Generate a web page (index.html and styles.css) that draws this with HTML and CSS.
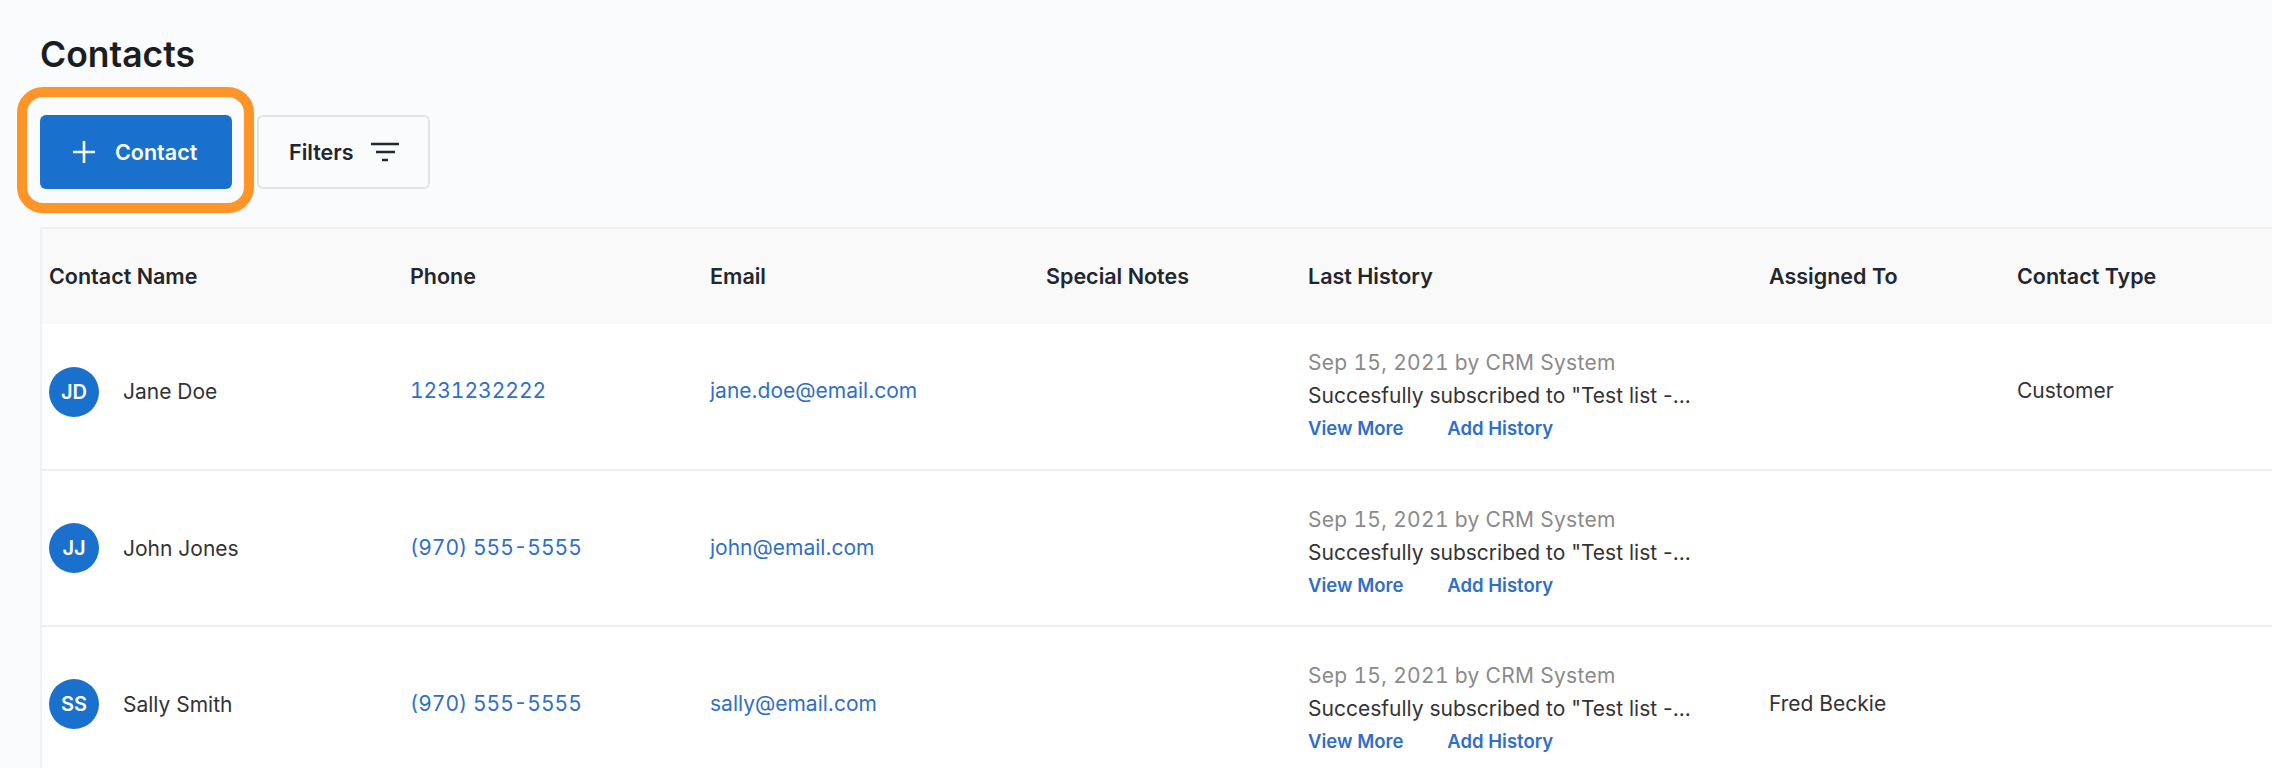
FILE: index.html
```html
<!DOCTYPE html>
<html lang="en">
<head>
    <meta charset="UTF-8">
    <title>Contacts</title>
    <link rel="stylesheet" href="styles.css">
</head>
<body>
    <div class="page">
        <h1>Contacts</h1>

        <div class="toolbar">
            <div class="add-wrap">
                <span class="highlight"></span>
                <button class="btn btn-primary">
                    <svg class="icon-plus" width="24" height="24" viewBox="0 0 24 24" fill="none" stroke="currentColor" stroke-width="2.6">
                        <path d="M12 1v22M1 12h22"/>
                    </svg>
                    Contact
                </button>
            </div>
            <button class="btn btn-filter">
                Filters
                <svg class="icon-filter" width="28" height="20" viewBox="0 0 28 20" fill="none" stroke="currentColor" stroke-width="2.7">
                    <path d="M0 2h28M5 10h19M11 18h6"/>
                </svg>
            </button>
        </div>

        <table class="contacts">
            <colgroup>
                <col class="col-name">
                <col class="col-phone">
                <col class="col-email">
                <col class="col-notes">
                <col class="col-history">
                <col class="col-assigned">
                <col class="col-type">
            </colgroup>
            <thead>
                <tr>
                    <th>Contact Name</th>
                    <th>Phone</th>
                    <th>Email</th>
                    <th>Special Notes</th>
                    <th>Last History</th>
                    <th>Assigned To</th>
                    <th>Contact Type</th>
                </tr>
            </thead>
            <tbody>
                <tr>
                    <td><div class="person"><span class="avatar">JD</span>Jane Doe</div></td>
                    <td><a class="cell-text link phone" href="#">1231232222</a></td>
                    <td><a class="cell-text link" href="#">jane.doe@email.com</a></td>
                    <td></td>
                    <td class="history">
                        <div class="history-date">Sep 15, 2021 by CRM System</div>
                        <div class="history-text">Succesfully subscribed to "Test list -...</div>
                        <div class="history-links"><a href="#">View More</a><a href="#">Add History</a></div>
                    </td>
                    <td></td>
                    <td><span class="cell-text">Customer</span></td>
                </tr>
                <tr>
                    <td><div class="person"><span class="avatar">JJ</span>John Jones</div></td>
                    <td><a class="cell-text link phone" href="#">(970) 555-5555</a></td>
                    <td><a class="cell-text link" href="#">john@email.com</a></td>
                    <td></td>
                    <td class="history">
                        <div class="history-date">Sep 15, 2021 by CRM System</div>
                        <div class="history-text">Succesfully subscribed to "Test list -...</div>
                        <div class="history-links"><a href="#">View More</a><a href="#">Add History</a></div>
                    </td>
                    <td></td>
                    <td></td>
                </tr>
                <tr>
                    <td><div class="person"><span class="avatar">SS</span>Sally Smith</div></td>
                    <td><a class="cell-text link phone" href="#">(970) 555-5555</a></td>
                    <td><a class="cell-text link" href="#">sally@email.com</a></td>
                    <td></td>
                    <td class="history">
                        <div class="history-date">Sep 15, 2021 by CRM System</div>
                        <div class="history-text">Succesfully subscribed to "Test list -...</div>
                        <div class="history-links"><a href="#">View More</a><a href="#">Add History</a></div>
                    </td>
                    <td><span class="cell-text">Fred Beckie</span></td>
                    <td></td>
                </tr>
            </tbody>
        </table>
    </div>
</body>
</html>
```

FILE: styles.css
```css
html, body {
    margin: 0;
    height: 100%;
    overflow: hidden;
}

body {
    font-family: Inter, "Liberation Sans", sans-serif;
    background: #fafbfd;
    color: #333333;
    font-size: 21px;
}

.page {
    padding: 34px 0 0 40px;
}

h1 {
    margin: 0;
    font-size: 35.5px;
    line-height: 42px;
    font-weight: 600;
    color: #1a1d24;
}

.toolbar {
    display: flex;
    gap: 25px;
    margin-top: 39px;
}

.add-wrap {
    position: relative;
    display: flex;
}

.highlight {
    position: absolute;
    left: -23px;
    top: -28px;
    right: -22px;
    bottom: -24px;
    border: 10px solid #ff9527;
    border-radius: 26px;
}

.btn {
    display: flex;
    align-items: center;
    height: 74px;
    border-radius: 6px;
    font-family: inherit;
    font-size: 21.5px;
    font-weight: 600;
    box-sizing: border-box;
}

.btn-primary {
    width: 192px;
    padding: 0 0 0 32px;
    gap: 19px;
    background: #1971cd;
    border: none;
    color: #ffffff;
}

.btn-filter {
    width: 173px;
    padding: 0 0 0 30px;
    gap: 17px;
    background: #fafbfd;
    border: 2px solid #e4e4e6;
    color: #22262e;
}

.contacts {
    width: 2232px;
    margin-top: 38px;
    table-layout: fixed;
    border-collapse: separate;
    border-spacing: 0;
    background: #ffffff;
    border-left: 2px solid #f0f1f3;
}

.col-name { width: 359px; }
.col-phone { width: 300px; }
.col-email { width: 336px; }
.col-notes { width: 262px; }
.col-history { width: 461px; }
.col-assigned { width: 248px; }
.col-type { width: 264px; }

th {
    height: 97px;
    padding: 0 0 2px 9px;
    box-sizing: border-box;
    background: #f9f9f9;
    border-top: 2px solid #eeeeee;
    text-align: left;
    font-size: 21.5px;
    font-weight: 600;
    color: #22262e;
}

td {
    height: 156px;
    padding: 0 0 0 9px;
    box-sizing: border-box;
    border-bottom: 2px solid #eeeeee;
    vertical-align: middle;
}

th:first-child,
td:first-child {
    padding-left: 7px;
}

tbody tr:first-child td {
    height: 147px;
    padding-bottom: 10px;
}

.cell-text {
    display: block;
    margin-bottom: 2px;
}

.person {
    display: flex;
    align-items: center;
    gap: 24px;
}

.avatar {
    display: flex;
    align-items: center;
    justify-content: center;
    width: 50px;
    height: 50px;
    border-radius: 50%;
    background: #1971cd;
    color: #ffffff;
    font-size: 20px;
    font-weight: 600;
}

.link {
    color: #2f6fc7;
    text-decoration: none;
}

.phone {
    font-variant-numeric: tabular-nums;
}

td.history {
    padding-top: 8px;
    line-height: 33px;
}

.history-date {
    color: #8a8a8a;
    font-variant-numeric: tabular-nums;
    letter-spacing: 0.3px;
}

.history-links {
    display: flex;
    gap: 44px;
    font-size: 18.5px;
    font-weight: 600;
}

.history-links a {
    color: #2f6fc7;
    text-decoration: none;
}
```
